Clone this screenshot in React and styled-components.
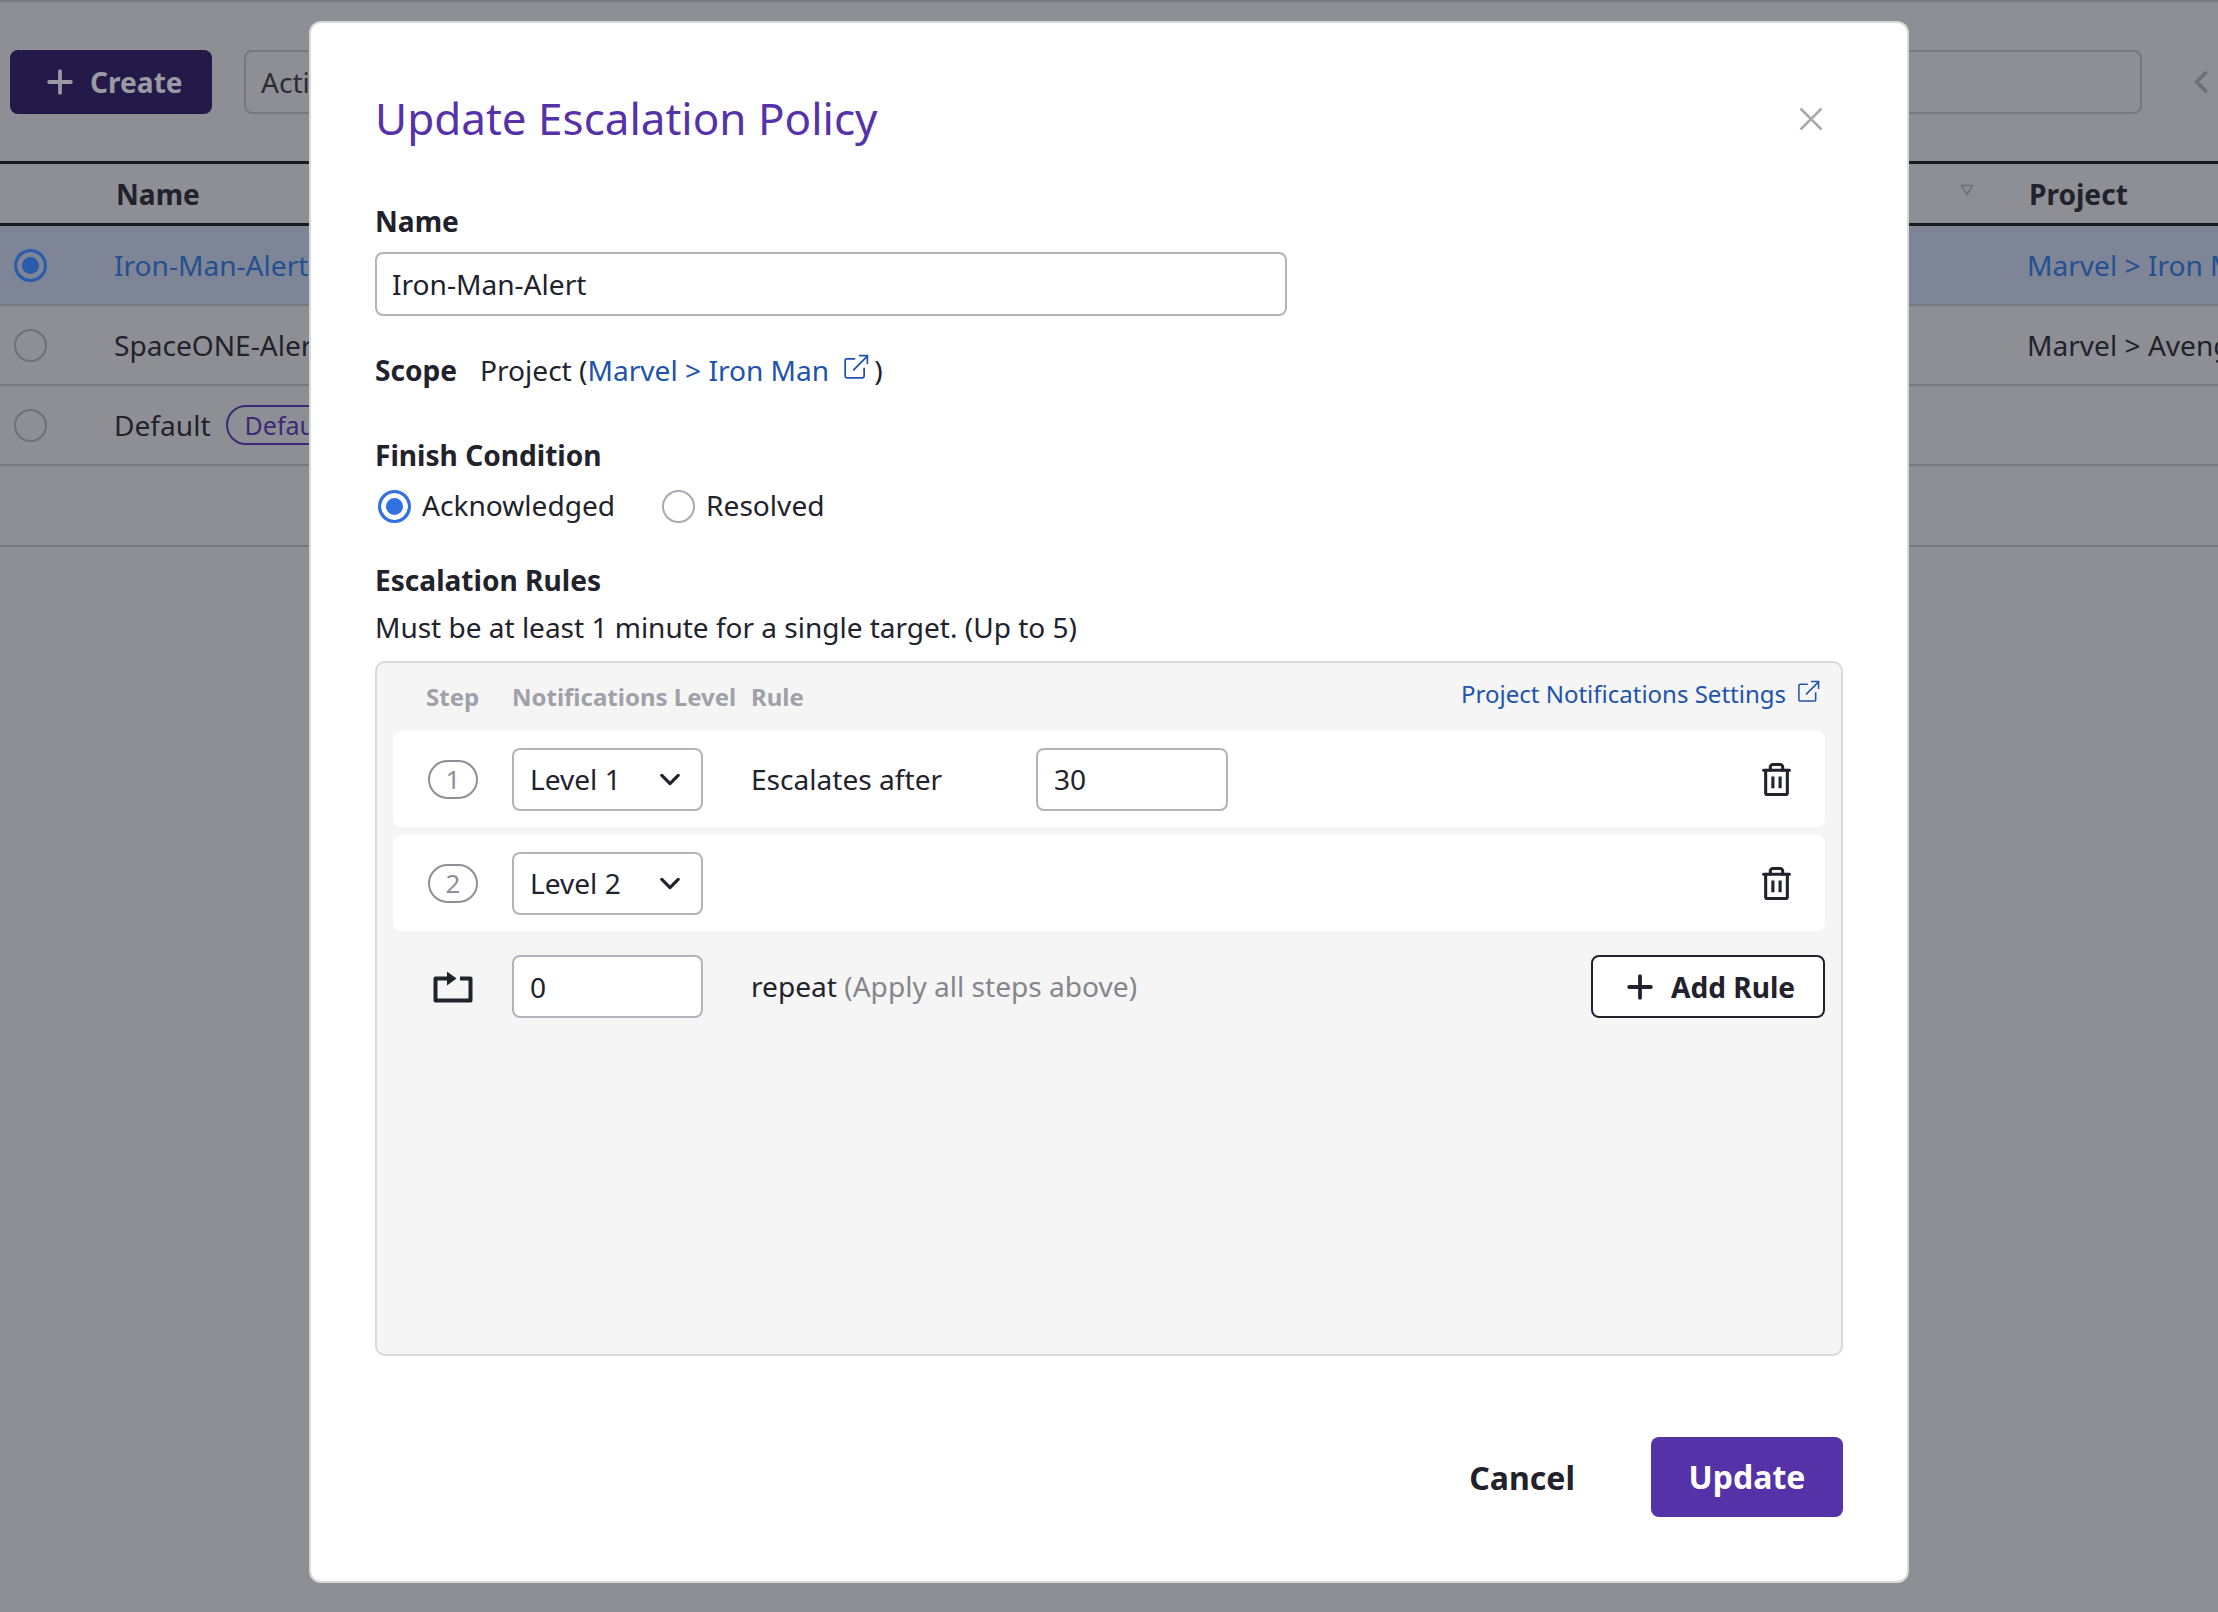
import React from 'react'
import styled, { createGlobalStyle } from 'styled-components'

const GlobalStyle = createGlobalStyle`
  html, body {
    margin: 0;
    padding: 0;
    overflow: hidden;
  }
  * {
    box-sizing: border-box;
  }
  body {
    font-family: "Noto Sans", sans-serif;
    color: #21222c;
  }
`

function Plus({ size, width }) {
  return (
    <svg width={size} height={size} viewBox="0 0 24 24" fill="none" stroke="currentColor" strokeWidth={width} strokeLinecap="round">
      <path d="M12 2V22M2 12H22" />
    </svg>
  )
}

function ExternalLink({ size }) {
  return (
    <svg width={size} height={size} viewBox="0 0 24 24" fill="none" stroke="currentColor" strokeWidth="1.600" strokeLinecap="square">
      <path d="M10.500 4.500H3.500a1.500 1.500 0 0 0-1.500 1.500V20.500a1.500 1.500 0 0 0 1.500 1.500H18a1.500 1.500 0 0 0 1.500-1.500v-7" />
      <path d="M10 14.500L22.500 2M15.500 1.500H22.500V8.500" />
    </svg>
  )
}

function Trash() {
  return (
    <svg width="29" height="33" viewBox="0 0 28 32" fill="none" stroke="#21222c" strokeWidth="3" strokeLinecap="round" strokeLinejoin="round">
      <path d="M1.500 7H26.500" />
      <path d="M8 7V4a2.500 2.500 0 0 1 2.500-2.500h7A2.500 2.500 0 0 1 20 4v3" />
      <path d="M3.500 7V29a1.500 1.500 0 0 0 1.500 1.500H23a1.500 1.500 0 0 0 1.500-1.500V7" />
      <path d="M10.500 13V24.500M17.500 13V24.500" strokeLinecap="butt" />
    </svg>
  )
}

function RepeatIcon() {
  return (
    <svg width="40" height="32" viewBox="0 0 40 32" fill="none">
      <path d="M14 7.500H2.500V29.500H37.500V7.500H27" stroke="#21222c" strokeWidth="4" strokeLinejoin="round" />
      <path d="M14 0.500L23.500 7.500L14 14.500Z" fill="#21222c" />
    </svg>
  )
}

function ChevronDown() {
  return (
    <svg width="20" height="13" viewBox="0 0 22 14" fill="none" stroke="#21222c" strokeWidth="3.500" strokeLinecap="round" strokeLinejoin="round">
      <path d="M2 2.500L11 11.500L20 2.500" />
    </svg>
  )
}

function CloseIcon() {
  return (
    <svg width="24" height="24" viewBox="0 0 24 24" fill="none" stroke="#a9aab0" strokeWidth="2.500">
      <path d="M1.500 1.500L22.500 22.500M22.500 1.500L1.500 22.500" />
    </svg>
  )
}

const rules = [
  { step: 1, level: 'Level 1', first: true },
  { step: 2, level: 'Level 2' },
]

const tableRows = [
  { name: 'Iron-Man-Alert', project: 'Marvel > Iron Man', selected: true },
  { name: 'SpaceONE-Alert', project: 'Marvel > Avengers' },
  { name: 'Default', badge: 'Default', project: '' },
  { name: '', project: '', blank: true },
]

function App() {
  return (
    <Page>
      <GlobalStyle />
      <TopStrip />
      <Toolbar>
        <CreateButton>
          <Plus size={26} width={3.5} />
          Create
        </CreateButton>
        <SearchBox>Action</SearchBox>
        <BackChevron viewBox="0 0 12 20" fill="none" stroke="#6f7076" strokeWidth="3.500" strokeLinecap="round">
          <path d="M10 2L2 10L10 18" />
        </BackChevron>
      </Toolbar>

      <HeaderRow>
        <span />
        <HeaderCell>Name</HeaderCell>
        <HeaderFilter>
          <svg width="14" height="12" viewBox="0 0 14 12" fill="none" stroke="#6f7076" strokeWidth="1.500">
            <path d="M1.500 1.500H12.500L7 10.500Z" />
          </svg>
        </HeaderFilter>
        <HeaderCell>Project</HeaderCell>
      </HeaderRow>
      {tableRows.map((row, i) => (
        <TableRow key={i} $selected={row.selected} $blank={row.blank}>
          {row.blank ? <span /> : <TableRadio $checked={row.selected} />}
          <NameCell $selected={row.selected}>
            {row.name}
            {row.badge && <Badge>{row.badge}</Badge>}
          </NameCell>
          <span />
          <NameCell $selected={row.selected}>{row.project}</NameCell>
        </TableRow>
      ))}

      <Modal>
        <ModalHead>
          <Title>Update Escalation Policy</Title>
          <CloseWrap><CloseIcon /></CloseWrap>
        </ModalHead>

        <NameLabel>Name</NameLabel>
        <NameInput defaultValue="Iron-Man-Alert" />

        <ScopeLine>
          <ScopeLabel>Scope</ScopeLabel>
          <span>Project (</span>
          <ScopeLink>
            Marvel &gt; Iron Man
            <ExternalLink size={26} />
          </ScopeLink>
          <ScopeClose>)</ScopeClose>
        </ScopeLine>

        <FinishLabel>Finish Condition</FinishLabel>
        <RadioGroup>
          <RadioItem>
            <FormRadio $checked />
            Acknowledged
          </RadioItem>
          <RadioItem>
            <FormRadio />
            Resolved
          </RadioItem>
        </RadioGroup>

        <RulesLabel>Escalation Rules</RulesLabel>
        <RulesHint>Must be at least 1 minute for a single target. (Up to 5)</RulesHint>

        <RulesBox>
          <RulesHeader>
            <StepHead>Step</StepHead>
            <ColHead>Notifications Level</ColHead>
            <ColHead>Rule</ColHead>
            <SettingsLink>
              Project Notifications Settings
              <ExternalLink size={23} />
            </SettingsLink>
          </RulesHeader>

          {rules.map((rule) => (
            <RuleRow key={rule.step}>
              <StepPill>{rule.step}</StepPill>
              <LevelSelect>
                {rule.level}
                <ChevronDown />
              </LevelSelect>
              <RuleBody>
                {rule.first && (
                  <>
                    <EscalateText>Escalates after</EscalateText>
                    <MinutesInput defaultValue="30" />
                  </>
                )}
              </RuleBody>
              <DeleteWrap><Trash /></DeleteWrap>
            </RuleRow>
          ))}

          <RepeatRow>
            <RepeatIconWrap><RepeatIcon /></RepeatIconWrap>
            <RepeatInput defaultValue="0" />
            <RepeatText>
              repeat&nbsp;<Muted>(Apply all steps above)</Muted>
            </RepeatText>
            <AddRuleButton>
              <Plus size={26} width={3.5} />
              Add Rule
            </AddRuleButton>
          </RepeatRow>
        </RulesBox>

        <Footer>
          <CancelButton>Cancel</CancelButton>
          <UpdateButton>Update</UpdateButton>
        </Footer>
      </Modal>
    </Page>
  )
}

export default App

const Page = styled.div`
  position: relative;
  width: 2218px;
  height: 100vh;
  overflow: hidden;
  background: #8e8f94;
  font-size: 28.1px;
`

const TopStrip = styled.div`
  height: 2px;
  background: #77787e;
`

const Toolbar = styled.div`
  display: flex;
  align-items: center;
  height: 64px;
  margin: 48px 0 47px;
  padding: 0 10px;
`

const CreateButton = styled.div`
  display: flex;
  align-items: center;
  gap: 17px;
  flex: none;
  width: 202px;
  height: 64px;
  padding-left: 37px;
  background: #241a4a;
  border-radius: 8px;
  color: #9a9aa2;
  font-weight: 700;
`

const SearchBox = styled.div`
  flex: 1;
  height: 64px;
  margin-left: 32px;
  margin-right: 52px;
  padding: 0 15px;
  line-height: 60px;
  border: 2px solid #77787e;
  border-radius: 8px;
  color: #2b2c35;
`

const BackChevron = styled.svg`
  flex: none;
  width: 14px;
  height: 22px;
`

const HeaderRow = styled.div`
  display: grid;
  grid-template-columns: 114px 1fr 119px 191px;
  align-items: center;
  height: 65px;
  border-top: 3px solid #1a1b22;
  border-bottom: 3px solid #1a1b22;
`

const HeaderCell = styled.div`
  padding-left: 2px;
  font-weight: 700;
  white-space: nowrap;
`

const HeaderFilter = styled.div`
  display: flex;
  justify-content: flex-end;
  padding-right: 53px;
  margin-top: -8px;
`

const TableRow = styled.div`
  display: grid;
  grid-template-columns: 114px 1fr 119px 191px;
  align-items: center;
  height: ${(p) => (p.$blank ? '81px' : '80px')};
  border-bottom: 2px solid #77787e;
  background: ${(p) => (p.$selected ? '#7d8597' : 'transparent')};
`

const TableRadio = styled.span`
  display: block;
  width: 33px;
  height: 33px;
  margin-left: 14px;
  border-radius: 50%;
  border: ${(p) => (p.$checked ? '3px solid #2b5bab' : '2px solid #6f7076')};
  background: ${(p) => (p.$checked ? '#2b5bab' : 'transparent')};
  box-shadow: ${(p) => (p.$checked ? 'inset 0 0 0 5px #7d8597' : 'none')};
`

const NameCell = styled.div`
  display: flex;
  align-items: center;
  color: ${(p) => (p.$selected ? '#24508f' : '#21222c')};
  white-space: nowrap;
  overflow: hidden;
`

const Badge = styled.span`
  display: inline-flex;
  align-items: center;
  height: 40px;
  margin-left: 15px;
  padding: 0 17px;
  border: 2px solid #3b2a78;
  border-radius: 20px;
  color: #3b2a78;
  font-size: 25px;
`

const Modal = styled.div`
  position: absolute;
  left: 309px;
  top: 21px;
  width: 1600px;
  height: 1562px;
  padding: 65px 64px 0;
  background: #fff;
  border: 2px solid #d9d9db;
  border-radius: 12px;
`

const ModalHead = styled.div`
  display: flex;
  align-items: center;
  justify-content: space-between;
  height: 60px;
`

const Title = styled.h1`
  margin: 0;
  color: #5632a8;
  font-size: 44px;
  font-weight: 400;
  line-height: 60px;
`

const CloseWrap = styled.div`
  display: flex;
  margin-top: 2px;
  margin-right: 20px;
`

const NameLabel = styled.div`
  margin-top: 55px;
  line-height: 36px;
  font-weight: 700;
`

const NameInput = styled.input`
  display: block;
  width: 912px;
  height: 64px;
  margin-top: 13px;
  padding: 0 15px;
  border: 2px solid #b3b4ba;
  border-radius: 8px;
  background: #fff;
  color: #21222c;
  font: inherit;
  outline: none;
`

const ScopeLine = styled.div`
  display: flex;
  align-items: center;
  height: 40px;
  margin-top: 34px;
`

const ScopeLabel = styled.span`
  width: 105px;
  font-weight: 700;
`

const ScopeLink = styled.span`
  display: inline-flex;
  align-items: center;
  gap: 14px;
  color: #2053ad;
  svg {
    margin-top: -6px;
  }
`

const ScopeClose = styled.span`
  margin-left: 5px;
`

const FinishLabel = styled.div`
  margin-top: 47px;
  line-height: 36px;
  font-weight: 700;
`

const RadioGroup = styled.div`
  display: flex;
  gap: 44px;
  height: 40px;
  margin-top: 12px;
`

const RadioItem = styled.label`
  display: flex;
  align-items: center;
  gap: 11px;
`

const FormRadio = styled.span`
  display: block;
  width: 33px;
  height: 33px;
  margin-top: 3px;
  margin-left: 3px;
  border-radius: 50%;
  border: ${(p) => (p.$checked ? '3px solid #3171e0' : '2px solid #a9aab0')};
  background: ${(p) => (p.$checked ? '#3171e0' : '#fff')};
  box-shadow: ${(p) => (p.$checked ? 'inset 0 0 0 5px #fff' : 'none')};
`

const RulesLabel = styled.div`
  margin-top: 37px;
  line-height: 36px;
  font-weight: 700;
`

const RulesHint = styled.div`
  margin-top: 11px;
  font-size: 28px;
  line-height: 36px;
`

const RulesBox = styled.div`
  height: 695px;
  margin-top: 16px;
  padding: 0 16px;
  background: #f5f5f5;
  border: 2px solid #d9d9db;
  border-radius: 10px;
`

const RulesHeader = styled.div`
  display: grid;
  grid-template-columns: 119px 239px 1fr auto;
  align-items: center;
  height: 68px;
`

const ColHead = styled.div`
  margin-top: -2px;
  color: #a0a1a8;
  font-size: 24px;
  font-weight: 700;
  white-space: nowrap;
`

const StepHead = styled(ColHead)`
  padding-left: 33px;
`

const SettingsLink = styled.div`
  display: flex;
  align-items: center;
  gap: 11px;
  padding-right: 5px;
  margin-top: -8px;
  color: #2053ad;
  font-size: 24px;
  svg {
    margin-top: -4px;
  }
`

const RuleRow = styled.div`
  display: grid;
  grid-template-columns: 119px 239px 1fr auto;
  align-items: center;
  height: 96px;
  margin-bottom: 8px;
  background: #fff;
  border-radius: 8px;
`

const StepPill = styled.div`
  width: 50px;
  height: 39px;
  margin-left: 35px;
  border: 2px solid #8e8f97;
  border-radius: 20px;
  color: #8e8f97;
  font-size: 26px;
  line-height: 34px;
  text-align: center;
`

const LevelSelect = styled.div`
  display: flex;
  align-items: center;
  justify-content: space-between;
  width: 191px;
  height: 63px;
  padding: 0 21px 0 16px;
  background: #fff;
  border: 2px solid #b3b4ba;
  border-radius: 8px;
`

const RuleBody = styled.div`
  display: flex;
  align-items: center;
  white-space: nowrap;
`

const RepeatText = styled(RuleBody)`
  margin-top: -2px;
`

const EscalateText = styled.span`
  width: 285px;
`

const MinutesInput = styled.input`
  width: 192px;
  height: 63px;
  padding: 0 16px;
  background: #fff;
  border: 2px solid #b3b4ba;
  border-radius: 8px;
  color: #21222c;
  font: inherit;
  outline: none;
`

const DeleteWrap = styled.div`
  display: flex;
  width: 63px;
  padding-right: 34px;
  justify-content: flex-end;
`

const RepeatRow = styled.div`
  display: grid;
  grid-template-columns: 119px 239px 1fr auto;
  align-items: center;
  height: 63px;
  margin-top: 24px;
`

const RepeatIconWrap = styled.div`
  display: flex;
  padding-left: 40px;
`

const RepeatInput = styled(MinutesInput)`
  width: 191px;
`

const Muted = styled.span`
  color: #85868d;
`

const AddRuleButton = styled.div`
  display: flex;
  align-items: center;
  gap: 18px;
  width: 234px;
  height: 63px;
  padding-left: 34px;
  background: #fff;
  border: 2px solid #21222c;
  border-radius: 8px;
  font-weight: 700;
`

const Footer = styled.div`
  display: flex;
  align-items: center;
  justify-content: flex-end;
  gap: 76px;
  margin-top: 81px;
`

const CancelButton = styled.div`
  font-size: 32px;
  font-weight: 700;
`

const UpdateButton = styled.div`
  width: 192px;
  height: 80px;
  background: #5632a8;
  border-radius: 8px;
  color: #fff;
  font-size: 32px;
  font-weight: 700;
  line-height: 80px;
  text-align: center;
`
